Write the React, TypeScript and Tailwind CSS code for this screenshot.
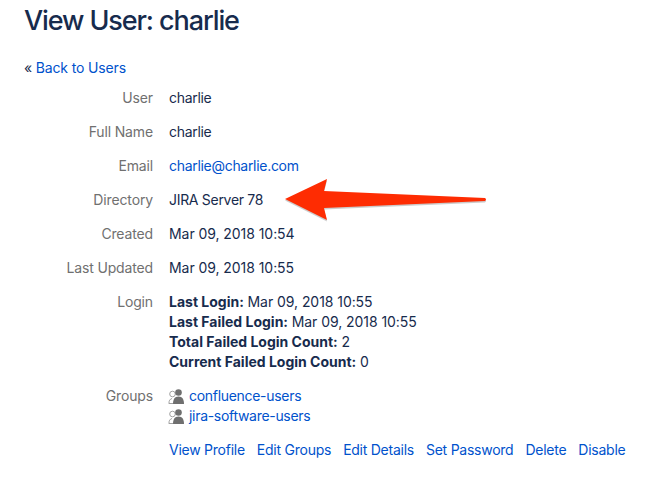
const rows = [
  { label: 'User', value: 'charlie' },
  { label: 'Full Name', value: 'charlie' },
  { label: 'Email', value: 'charlie@charlie.com', link: true },
  { label: 'Directory', value: 'JIRA Server 78' },
  { label: 'Created', value: 'Mar 09, 2018 10:54', date: true },
  { label: 'Last Updated', value: 'Mar 09, 2018 10:55', date: true },
];

const logins = [
  { label: 'Last Login:', value: 'Mar 09, 2018 10:55' },
  { label: 'Last Failed Login:', value: 'Mar 09, 2018 10:55' },
  { label: 'Total Failed Login Count:', value: '2' },
  { label: 'Current Failed Login Count:', value: '0' },
];

const actions = ['View Profile', 'Edit Groups', 'Edit Details', 'Set Password', 'Delete', 'Disable'];

function GroupIcon() {
  return (
    <svg width="17" height="17" viewBox="0 0 17 17" className="ml-[-1px] shrink-0">
      {/* back person, outlined */}
      <circle cx="4.500" cy="6" r="2.800" fill="none" stroke="#a0a0a0" strokeWidth="1" />
      <path d="M1 15.500c-.2-2.800 1-4.500 3-5" fill="none" stroke="#a0a0a0" strokeWidth="1" />
      <path d="M.8 15.500h4.500" fill="none" stroke="#a0a0a0" strokeWidth="1" />
      {/* front person */}
      <circle cx="10.500" cy="4.500" r="3.300" fill="#6f6f6f" />
      <path d="M5 16c0-4.500 1.500-7.500 5.500-7.500s5.500 3 5.500 7.500z" fill="#6f6f6f" />
    </svg>
  );
}

function Row({ label, children }: { label: string; children: React.ReactNode }) {
  return (
    <div className="flex">
      <div className="w-[153px] shrink-0 text-right tracking-[-0.14px] text-[#707070]">{label}</div>
      <div className="ml-4">{children}</div>
    </div>
  );
}

export default function App() {
  return (
    <div
      className="relative h-[480px] w-[650px] overflow-hidden bg-white text-[14px] leading-5 tracking-[-0.3px] text-[#172b4d]"
      style={{ fontFamily: 'Inter, "Liberation Sans", sans-serif' }}
    >
      <div className="pt-[3px]">
        <h1 className="pl-[24px] text-[27px] font-medium leading-[36px] tracking-[-1.1px] text-[#172b4d]">
          View User: charlie
        </h1>

        <div className="mt-[19px] pl-[24px] tracking-[-0.15px]">
          « <a className="text-[#0052cc]">Back to Users</a>
        </div>

        <div className="mt-[10px] flex flex-col gap-[14px]">
          {rows.map((row) => (
            <Row key={row.label} label={row.label}>
              {row.link ? (
                <a className="text-[#0052cc]">{row.value}</a>
              ) : (
                <span className={row.date ? 'tracking-[-0.06px]' : undefined}>{row.value}</span>
              )}
            </Row>
          ))}

          <Row label="Login">
            {logins.map((item) => (
              <div key={item.label}>
                <span className="font-bold tracking-[0px]">{item.label}</span>{' '}
                <span className="tracking-[-0.06px]">{item.value}</span>
              </div>
            ))}
          </Row>

          <Row label="Groups">
            {['confluence-users', 'jira-software-users'].map((group) => (
              <div key={group} className="flex items-center gap-[4px]">
                <GroupIcon />
                <a className="text-[#0052cc]">{group}</a>
              </div>
            ))}
          </Row>

          <div className="ml-[169px] flex gap-[12px] tracking-[-0.25px] text-[#0052cc]">
            {actions.map((action) => (
              <a key={action}>{action}</a>
            ))}
          </div>
        </div>
      </div>

      {/* annotation arrow drawn over the page */}
      <svg width="220" height="60" viewBox="0 0 220 60" className="absolute left-[280px] top-[172px]">
        <path
          d="M5 27 L47 7 L44 19 L205 26 Q207 27.500 205 29 L44 36 L47 48 Z"
          fill="#000"
          opacity="0.2"
          transform="translate(0 1.500)"
        />
        <path d="M5 27 L47 7 L44 19 L205 26 Q207 27.500 205 29 L44 36 L47 48 Z" fill="#fe2c02" />
      </svg>
    </div>
  );
}
